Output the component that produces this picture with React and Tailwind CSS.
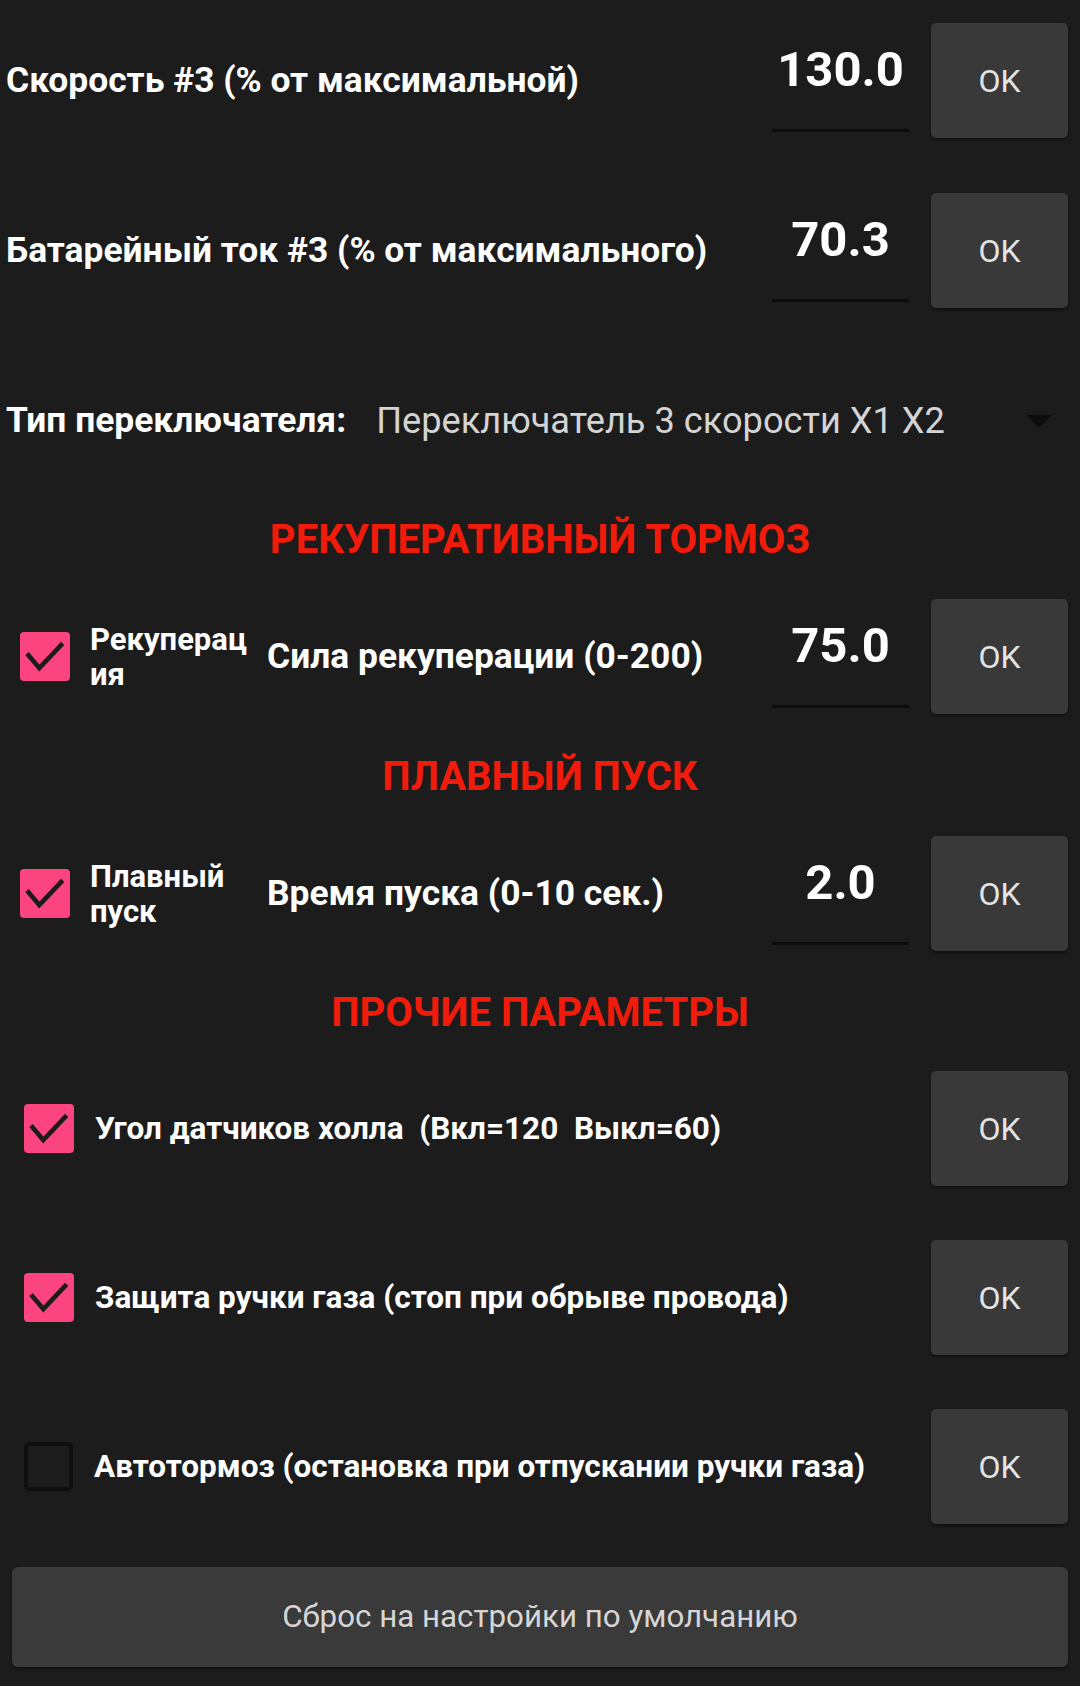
import React from "react";

const font = { fontFamily: "Roboto, 'Noto Sans', sans-serif" };

function OkButton() {
  return (
    <div className="w-[137px] h-[115px] shrink-0 mr-[12px] ml-[22px] rounded-[5px] bg-[#393939] shadow-[0_2px_3px_rgba(0,0,0,0.45)] flex items-center justify-center text-[32px] text-[#e4e4e4]">
      OK
    </div>
  );
}

function Field({ value }) {
  return (
    <div className="w-[137px] h-[115px] shrink-0 flex flex-col items-center">
      <div className="pt-[22px] text-[49px] leading-none font-bold text-white">{value}</div>
      <div className="mt-auto mb-[6px] w-full h-[3px] bg-[#0c0c0c]" />
    </div>
  );
}

function Check({ checked, left }) {
  if (!checked) {
    return (
      <div className={`${left} w-[49px] h-[49px] shrink-0 rounded-[5px] border-[4px] border-[#0f0f0f]`} />
    );
  }
  return (
    <div className={`${left} w-[50px] h-[49px] shrink-0 rounded-[4px] bg-[#fc4580] relative`}>
      <svg width="50" height="49" viewBox="0 0 50 49" className="absolute inset-0">
        <path d="M7 21.5 L19.3 36 L42.7 11.3" fill="none" stroke="#1c1c1c" strokeWidth="4.6" strokeLinejoin="miter" />
      </svg>
    </div>
  );
}

function ValueRow({ label, value, mt }) {
  return (
    <div className={`flex items-center h-[115px] ${mt}`}>
      <div className="flex-1 min-w-0 pl-[6px] text-[35.4px] font-bold text-white whitespace-nowrap">{label}</div>
      <Field value={value} />
      <OkButton />
    </div>
  );
}

function CheckValueRow({ small, label, value, mt }) {
  return (
    <div className={`flex items-center h-[115px] ${mt}`}>
      <Check checked left="ml-[20px]" />
      <div className="ml-[20px] w-[177px] shrink-0 text-[31px] leading-[35px] font-bold text-white">
        {small[0]}
        <br />
        {small[1]}
      </div>
      <div className="flex-1 min-w-0 text-[35.4px] font-bold text-white whitespace-nowrap">{label}</div>
      <Field value={value} />
      <OkButton />
    </div>
  );
}

function CheckRow({ checked, label, mt }) {
  return (
    <div className={`flex items-center h-[115px] ${mt}`}>
      <Check checked={checked} left="ml-[24px]" />
      <div className="flex-1 min-w-0 ml-[21px] text-[31.5px] font-bold text-white whitespace-pre">{label}</div>
      <OkButton />
    </div>
  );
}

function Heading({ children, mt }) {
  return (
    <div className={`h-[50px] flex items-center justify-center text-[40px] font-bold text-[#f01b0b] ${mt}`}>
      {children}
    </div>
  );
}

export default function App() {
  return (
    <div className="w-[1080px] min-h-[1686px] bg-[#1c1c1c] flex flex-col" style={font}>
      <ValueRow label="Скорость #3 (% от максимальной)" value="130.0" mt="mt-[23px]" />
      <ValueRow label="Батарейный ток #3 (% от максимального)" value="70.3" mt="mt-[55px]" />

      <div className="flex items-center h-[60px] mt-[83px]">
        <div className="pl-[6px] text-[35.4px] font-bold text-white whitespace-nowrap">Тип переключателя:</div>
        <div className="ml-[30px] text-[36.2px] text-[#d4d4d4] whitespace-nowrap">Переключатель 3 скорости X1 X2</div>
        <svg width="26" height="13" viewBox="0 0 26 13" className="ml-auto mr-[28px] shrink-0">
          <polygon points="0,0 26,0 13,13" fill="#0c0c0c" />
        </svg>
      </div>

      <Heading mt="mt-[64px]">РЕКУПЕРАТИВНЫЙ ТОРМОЗ</Heading>
      <CheckValueRow small={["Рекуперац", "ия"]} label="Сила рекуперации (0-200)" value="75.0" mt="mt-[34px]" />

      <Heading mt="mt-[38px]">ПЛАВНЫЙ ПУСК</Heading>
      <CheckValueRow small={["Плавный", "пуск"]} label="Время пуска (0-10 сек.)" value="2.0" mt="mt-[34px]" />

      <Heading mt="mt-[37px]">ПРОЧИЕ ПАРАМЕТРЫ</Heading>
      <CheckRow checked label="Угол датчиков холла  (Вкл=120  Выкл=60)" mt="mt-[33px]" />
      <CheckRow checked label="Защита ручки газа (стоп при обрыве провода)" mt="mt-[54px]" />
      <CheckRow checked={false} label="Автотормоз (остановка при отпускании ручки газа)" mt="mt-[54px]" />

      <div className="mx-[12px] mt-[43px] h-[100px] rounded-[6px] bg-[#3a3a3a] shadow-[0_2px_3px_rgba(0,0,0,0.45)] flex items-center justify-center text-[31.3px] text-[#d6d6d6]">
        Сброс на настройки по умолчанию
      </div>
    </div>
  );
}
